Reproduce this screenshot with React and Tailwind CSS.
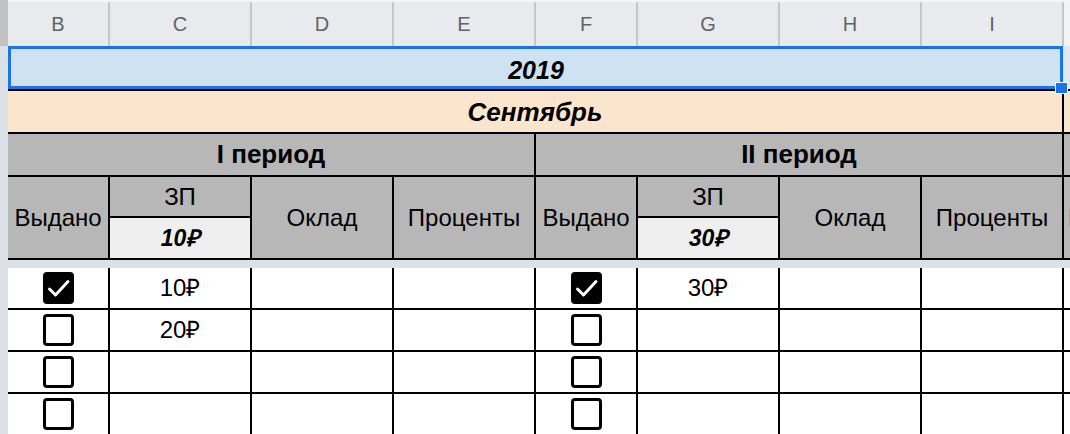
import React from "react";

const Check = ({ checked }) =>
  checked ? (
    <div className="w-[31px] h-[32px] rounded-[4px] bg-black flex items-center justify-center">
      <svg width="31" height="32" viewBox="0 0 31 32" fill="none">
        <path d="M6.5 17 L12.5 23 L25 9.5" stroke="white" strokeWidth="3" strokeLinecap="round" strokeLinejoin="round" />
      </svg>
    </div>
  ) : (
    <div className="w-[31px] h-[32px] rounded-[4px] border-[3px] border-black bg-white" />
  );

const letters = [
  ["B", "w-[102px]"],
  ["C", "w-[142px]"],
  ["D", "w-[142px]"],
  ["E", "w-[142px]"],
  ["F", "w-[102px]"],
  ["G", "w-[142px]"],
  ["H", "w-[142px]"],
  ["I", "w-[142px]"],
];

const data = [
  [true, "10₽", true, "30₽"],
  [false, "20₽", false, ""],
  [false, "", false, ""],
  [false, "", false, ""],
];

function SubHeader({ total }) {
  return (
    <>
      <div className="w-[102px] shrink-0 border-r-2 border-black bg-[#b7b7b7] flex items-center justify-center text-[24px]">
        Выдано
      </div>
      <div className="w-[142px] shrink-0 border-r-2 border-black flex flex-col">
        <div className="h-[41px] border-b-2 border-black bg-[#b7b7b7] flex items-center justify-center text-[24px]">
          ЗП
        </div>
        <div className="flex-1 bg-[#efefef] flex items-center justify-center text-[23px] font-bold italic">
          {total}
        </div>
      </div>
      <div className="w-[142px] shrink-0 border-r-2 border-black bg-[#b7b7b7] flex items-center justify-center text-[24px]">
        Оклад
      </div>
      <div className="w-[142px] shrink-0 border-r-2 border-black bg-[#b7b7b7] flex items-center justify-center text-[24px]">
        Проценты
      </div>
    </>
  );
}

export default function App() {
  return (
    <div className="w-[1070px] h-[434px] overflow-hidden bg-white flex font-['Liberation_Sans',Arial,sans-serif] text-black">
      <div className="w-[8px] shrink-0 flex flex-col">
        <div className="h-[46px] bg-[#c2c2c2]" />
        <div className="flex-1 bg-[#dce1e8]" />
      </div>
      <div className="flex-1 flex flex-col min-w-0">
        {/* column letters */}
        <div className="h-[46px] shrink-0 flex bg-[#e8eaed] border-t-2 border-[#f4f5f6]">
          {letters.map(([l, w]) => (
            <div
              key={l}
              className={`${w} shrink-0 border-r-2 border-[#c6c6c6] flex items-center justify-center text-[20px] text-[#5f6368]`}
            >
              {l}
            </div>
          ))}
          <div className="flex-1 bg-[#f1f3f4]" />
        </div>

        {/* 2019 */}
        <div className="h-[45px] shrink-0 flex border-b-2 border-black relative">
          <div className="w-[1056px] shrink-0 bg-[#cfe2f3] flex items-center justify-center pt-[6px] text-[25px] font-bold italic">
            2019
          </div>
          <div className="flex-1 bg-[#dde8f3]" />
          <div className="absolute left-0 top-0 w-[1055px] h-[43px] border-[3px] border-[#1a73e8]" />
          <div className="absolute left-[1047px] top-[36px] w-[13px] h-[12px] bg-[#1a73e8] border border-white" />
        </div>

        {/* Сентябрь */}
        <div className="h-[43px] shrink-0 flex border-b-2 border-black">
          <div className="w-[1056px] shrink-0 border-r-2 border-black bg-[#fce5cd] flex items-center justify-center pt-[2px] text-[26px] font-bold italic">
            Сентябрь
          </div>
          <div className="flex-1 bg-[#fce5cd]" />
        </div>

        {/* periods */}
        <div className="h-[43px] shrink-0 flex border-b-2 border-black bg-[#b7b7b7]">
          <div className="w-[528px] shrink-0 border-r-2 border-black flex items-center justify-center text-[26px] font-bold">
            I период
          </div>
          <div className="w-[528px] shrink-0 border-r-2 border-black flex items-center justify-center text-[26px] font-bold">
            II период
          </div>
          <div className="flex-1" />
        </div>

        {/* sub header */}
        <div className="h-[83px] shrink-0 flex border-b-2 border-black">
          <SubHeader total="10₽" />
          <SubHeader total="30₽" />
          <div className="flex-1 bg-[#b7b7b7] overflow-hidden flex items-center pl-[4px] text-[24px] whitespace-nowrap">
            Выдано
          </div>
        </div>

        {/* freeze band */}
        <div className="h-[8px] shrink-0 bg-[#dce1e8]" />

        {/* data rows */}
        {data.map(([c1, v1, c2, v2], i) => (
          <div key={i} className="h-[42px] shrink-0 flex border-b-2 border-black">
            <div className="w-[102px] shrink-0 border-r-2 border-black flex items-center justify-center">
              <Check checked={c1} />
            </div>
            <div className="w-[142px] shrink-0 border-r-2 border-black flex justify-center pt-[6px] text-[24px] leading-[28px]">
              {v1}
            </div>
            <div className="w-[142px] shrink-0 border-r-2 border-black" />
            <div className="w-[142px] shrink-0 border-r-2 border-black" />
            <div className="w-[102px] shrink-0 border-r-2 border-black flex items-center justify-center">
              <Check checked={c2} />
            </div>
            <div className="w-[142px] shrink-0 border-r-2 border-black flex justify-center pt-[6px] text-[24px] leading-[28px]">
              {v2}
            </div>
            <div className="w-[142px] shrink-0 border-r-2 border-black" />
            <div className="w-[142px] shrink-0 border-r-2 border-black" />
            <div className="flex-1" />
          </div>
        ))}
      </div>
    </div>
  );
}
